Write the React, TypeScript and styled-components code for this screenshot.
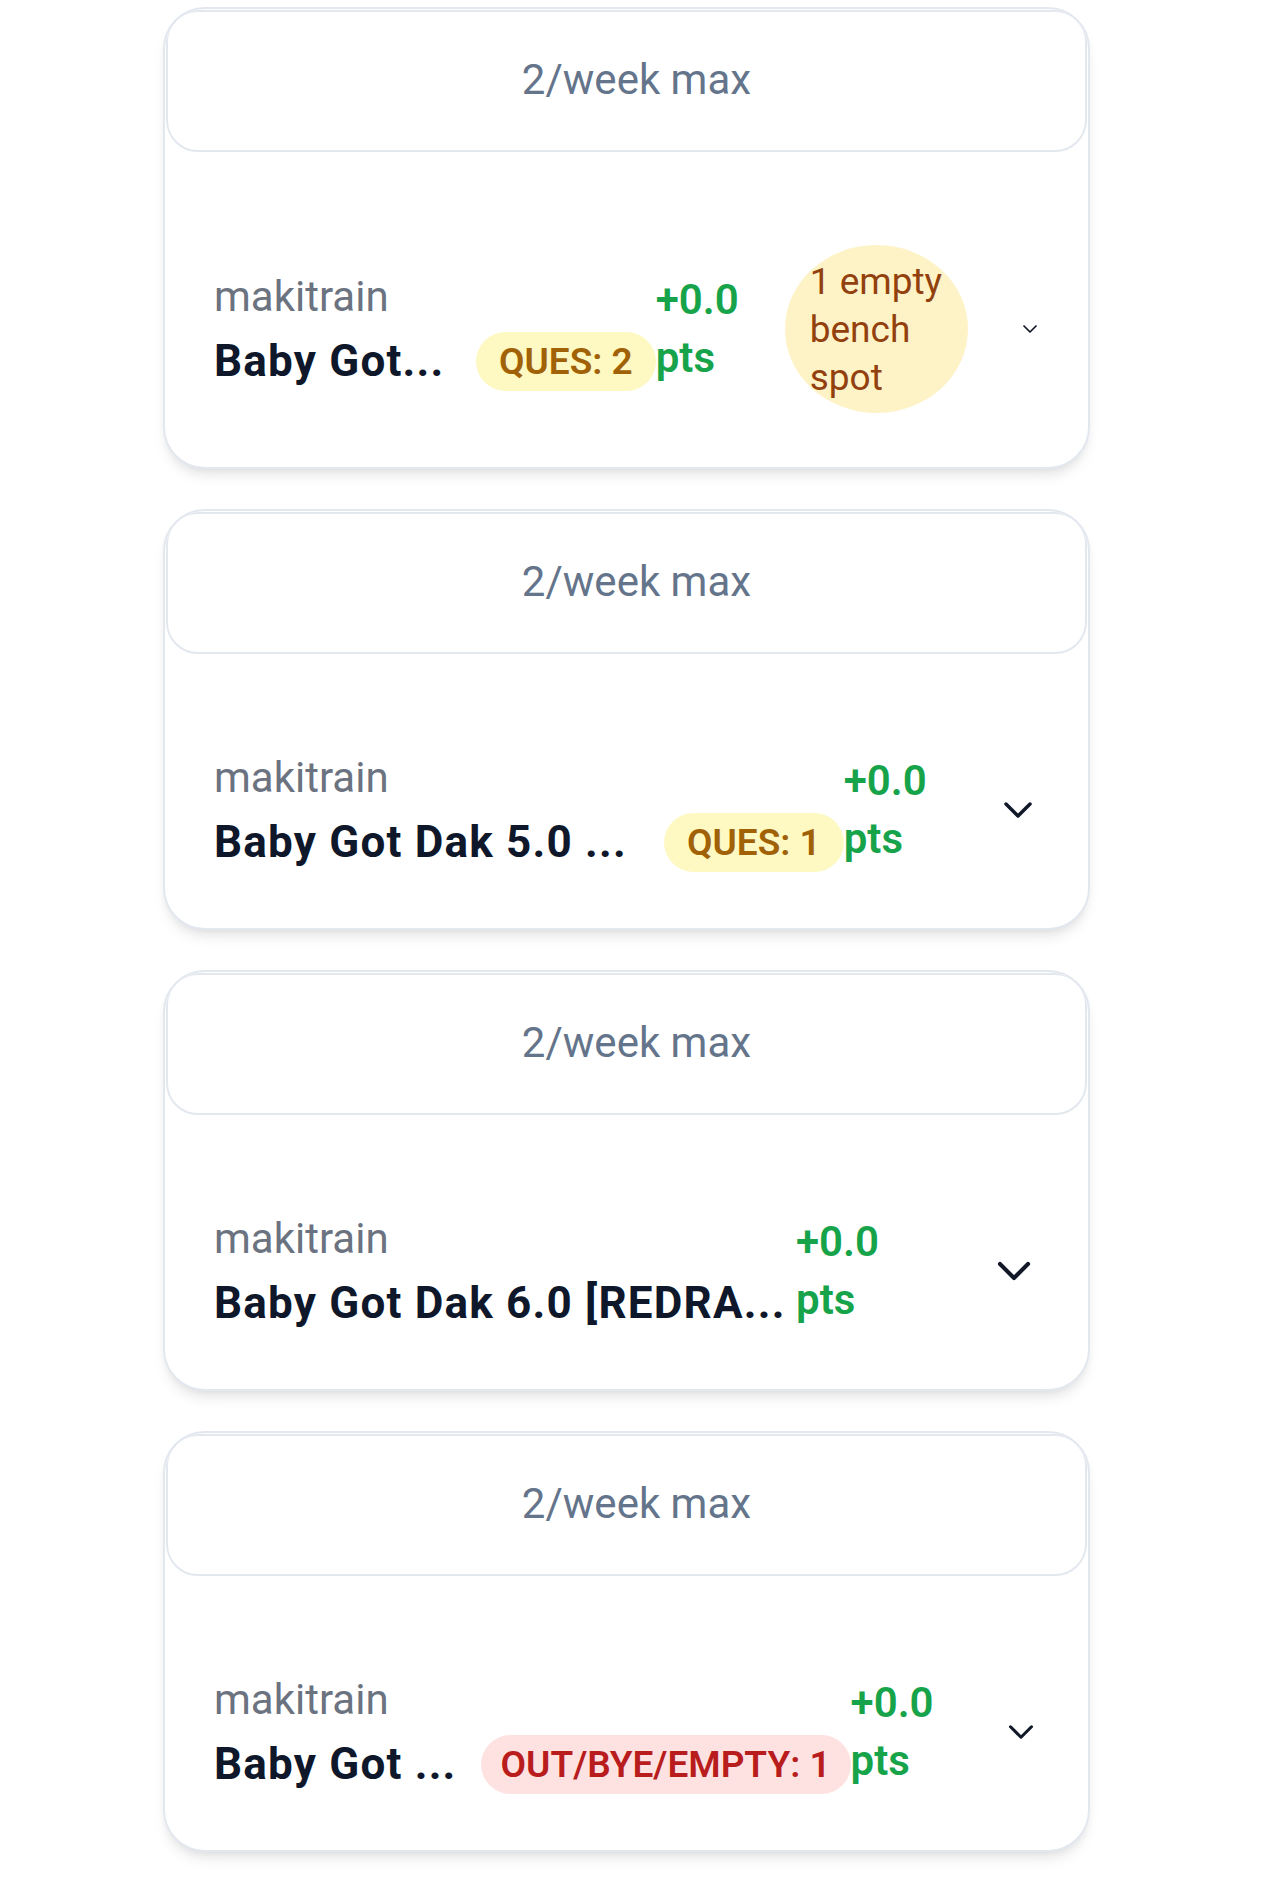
import React from "react";
import styled, { createGlobalStyle, css } from "styled-components";

const GlobalStyle = createGlobalStyle`
  html, body {
    margin: 0;
    padding: 0;
    background: #ffffff;
  }
  body {
    font-family: Roboto, "Noto Sans", "Liberation Sans", sans-serif;
    -webkit-font-smoothing: antialiased;
  }
  * { box-sizing: border-box; }
`;

const Page = styled.div`
  padding: 7px 0 30px 163px;
`;

const List = styled.div`
  width: 927px;
  display: flex;
  flex-direction: column;
  gap: 40px;
`;

const Card = styled.section`
  background: #ffffff;
  border: 2px solid #e3e8ef;
  border-radius: 42px;
  box-shadow: 0 10px 14px -4px rgba(15, 23, 42, 0.1),
    0 4px 8px -4px rgba(15, 23, 42, 0.08);
  overflow: hidden;
`;

const Header = styled.header`
  margin: 1px 1px 0;
  height: 142px;
  border: 2px solid #e3e8ef;
  border-radius: 32px;
  display: flex;
  align-items: center;
  justify-content: center;
  padding: 0 0 4px 20px;
  font-size: 42px;
  line-height: 63px;
  color: #64748b;
`;

const Body = styled.div`
  padding: 92px 46px 54px 49px;
`;

const Row = styled.div`
  display: flex;
  align-items: center;
`;

const LeftCol = styled.div`
  display: flex;
  flex-direction: column;
  flex: none;
`;

const Owner = styled.div`
  font-size: 42px;
  line-height: 63px;
  color: #6b7280;
`;

const NameLine = styled.div`
  margin-top: 2px;
  height: 63px;
  display: flex;
  align-items: center;
`;

const Name = styled.div<{ $minWidth?: number }>`
  flex: none;
  min-width: ${(p) => (p.$minWidth ? `${p.$minWidth}px` : "0")};
  font-size: 44px;
  letter-spacing: 1.2px;
  line-height: 63px;
  font-weight: 700;
  color: #0f172a;
  white-space: nowrap;
`;

type Tone = "warn" | "danger";

const Badge = styled.span<{ $tone: Tone }>`
  flex: none;
  margin-left: 28px;
  height: 59px;
  padding: 0 23px;
  border-radius: 999px;
  display: inline-flex;
  align-items: center;
  font-size: 37px;
  font-weight: 600;
  white-space: nowrap;
  ${(p) =>
    p.$tone === "warn"
      ? css`
          background: #fef9c3;
          color: #a16207;
        `
      : css`
          margin-left: 24px;
          padding: 0 20px;
          background: #fee2e2;
          color: #b91c1c;
        `}
`;

const Points = styled.div`
  flex: none;
  width: min-content;
  font-size: 42px;
  line-height: 58px;
  font-weight: 600;
  color: #16a34a;
`;

const Bench = styled.div`
  flex: none;
  align-self: flex-start;
  margin: 1px 0 0 46px;
  width: 183px;
  height: 168px;
  padding: 13px 25px;
  border-radius: 50%;
  background: #fef3c7;
  color: #92400e;
  font-size: 37px;
  line-height: 48px;
`;

const Toggle = styled.button<{ $size: number }>`
  margin-left: auto;
  flex: none;
  width: ${(p) => p.$size}px;
  height: ${(p) => p.$size}px;
  padding: 0;
  border: 0;
  background: transparent;
  color: #111827;
  display: flex;
  align-items: center;
  justify-content: center;
  cursor: pointer;

  svg {
    width: 100%;
    height: 100%;
    display: block;
  }
`;

type CardData = {
  owner: string;
  name: string;
  nameWidth?: number;
  badge?: { label: string; tone: Tone };
  points: string;
  bench?: string;
  chevron: number;
};

const cards: CardData[] = [
  {
    owner: "makitrain",
    name: "Baby Got...",
    nameWidth: 234,
    badge: { label: "QUES: 2", tone: "warn" },
    points: "+0.0 pts",
    bench: "1 empty bench spot",
    chevron: 24,
  },
  {
    owner: "makitrain",
    name: "Baby Got Dak 5.0 ...",
    nameWidth: 422,
    badge: { label: "QUES: 1", tone: "warn" },
    points: "+0.0 pts",
    chevron: 48,
  },
  {
    owner: "makitrain",
    name: "Baby Got Dak 6.0 [REDRA...",
    nameWidth: 582,
    points: "+0.0 pts",
    chevron: 56,
  },
  {
    owner: "makitrain",
    name: "Baby Got ...",
    nameWidth: 239,
    badge: { label: "OUT/BYE/EMPTY: 1", tone: "danger" },
    points: "+0.0 pts",
    chevron: 42,
  },
];

const Chevron = () => (
  <svg viewBox="0 0 24 24" fill="none" stroke="currentColor" strokeWidth={1.75} strokeLinecap="round" strokeLinejoin="round">
    <path d="M6 9l6 6 6-6" />
  </svg>
);

export default function App() {
  return (
    <>
      <GlobalStyle />
      <Page>
        <List>
          {cards.map((c, i) => (
            <Card key={i}>
              <Header>2/week max</Header>
              <Body>
                <Row>
                  <LeftCol>
                    <Owner>{c.owner}</Owner>
                    <NameLine>
                      <Name $minWidth={c.nameWidth}>{c.name}</Name>
                      {c.badge && <Badge $tone={c.badge.tone}>{c.badge.label}</Badge>}
                    </NameLine>
                  </LeftCol>
                  <Points>{c.points}</Points>
                  {c.bench && <Bench>{c.bench}</Bench>}
                  <Toggle $size={c.chevron} aria-label="Expand">
                    <Chevron />
                  </Toggle>
                </Row>
              </Body>
            </Card>
          ))}
        </List>
      </Page>
    </>
  );
}
